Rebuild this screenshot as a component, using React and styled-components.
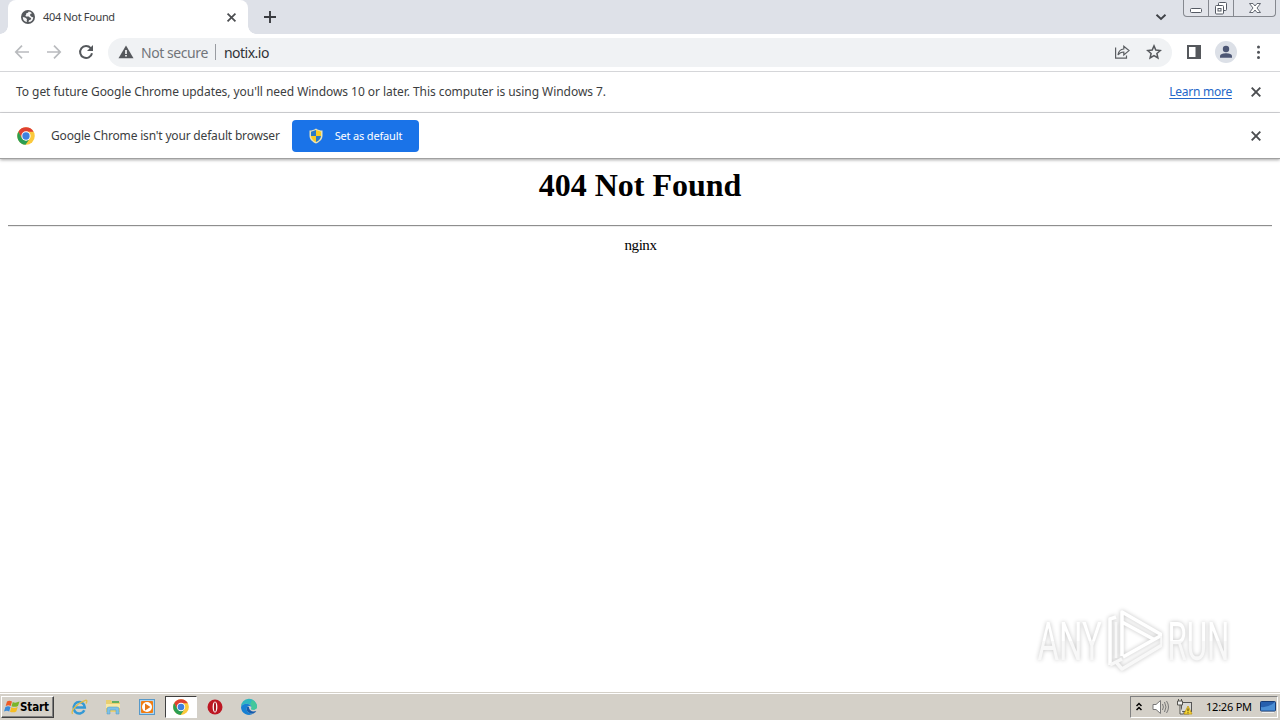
import React from 'react';
import styled, { createGlobalStyle } from 'styled-components';

const Global = createGlobalStyle`
  * { box-sizing: border-box; }
  html, body { margin: 0; padding: 0; overflow: hidden; background: #fff; }
  svg { display: block; flex: none; }
`;

const Screen = styled.div`
  position: relative;
  width: 1280px;
  height: 720px;
  display: flex;
  flex-direction: column;
  overflow: hidden;
  background: #fff;
  font-family: 'Noto Sans', 'DejaVu Sans', sans-serif;
  color: #333;
`;

const Label = styled.span`
  font-size: ${p => p.$size || 12}px;
  line-height: 16px;
  letter-spacing: ${p => p.$track || 0}px;
  color: ${p => p.$color || '#3c3e41'};
  margin-left: ${p => p.$left || 0}px;
  padding-top: ${p => p.$drop || 0}px;
  white-space: nowrap;
`;

const TabStrip = styled.div`
  height: 34px;
  flex: none;
  display: flex;
  align-items: flex-start;
  padding-left: 8px;
  background: #dee1e8;
`;

const Tab = styled.div`
  position: relative;
  width: 240px;
  height: 34px;
  padding: 0 11px 0 13px;
  display: flex;
  align-items: center;
  background: #fff;
  border-radius: 8px 8px 0 0;
  &::before, &::after {
    content: '';
    position: absolute;
    bottom: 0;
    width: 8px;
    height: 8px;
  }
  &::before { left: -8px; background: radial-gradient(circle at 0 0, transparent 7.5px, #fff 8px); }
  &::after { right: -8px; background: radial-gradient(circle at 100% 0, transparent 7.5px, #fff 8px); }
  ${Label} { flex: 1; margin-left: 8px; }
`;

const NewTab = styled.div`
  height: 34px;
  padding-left: 15px;
  display: flex;
  align-items: center;
  flex: 1;
`;

const TabSearch = styled.div`
  height: 34px;
  display: flex;
  align-items: center;
  margin-right: 16px;
`;

const WindowButtons = styled.div`
  display: flex;
  width: 93px;
  height: 17px;
  margin-right: 4px;
  border: 1px solid #85888f;
  border-top: 0;
  border-radius: 0 0 4px 4px;
  background: #e2e4ea;
`;

const WindowButton = styled.div`
  width: ${p => p.$w}px;
  display: flex;
  justify-content: center;
  border-right: ${p => (p.$last ? 0 : 1)}px solid #85888f;
`;

const Toolbar = styled.div`
  height: 38px;
  flex: none;
  display: flex;
  align-items: center;
  padding: 0 13px 1px 14px;
  border-bottom: 1px solid #d5d6d9;
`;

const NavIcons = styled.div`
  display: flex;
  gap: 16px;
  width: 94px;
`;

const Omnibox = styled.div`
  width: 1064px;
  height: 29px;
  display: flex;
  align-items: center;
  padding: 0 10px 0 10px;
  border-radius: 15px;
  background: #f0f2f4;
`;

const Divider = styled.div`
  width: 1px;
  height: 16px;
  margin: 0 8px 0 7px;
  background: #999ca1;
`;

const Actions = styled.div`
  margin-left: auto;
  display: flex;
  align-items: center;
  gap: 16px;
`;

const ToolbarEnd = styled.div`
  display: flex;
  align-items: center;
  gap: 13px;
  margin-left: 14px;
`;

const InfoBar = styled.div`
  height: ${p => p.$h}px;
  flex: none;
  display: flex;
  align-items: center;
  padding: 0 18px 0 16px;
  border-bottom: ${p => (p.$last ? '1px solid #a0a0a0' : '1px solid #d5d6d9')};
  box-shadow: ${p => (p.$last ? '0 1px 3px rgba(0,0,0,.35)' : 'none')};
`;

const Link = styled.a`
  margin-left: auto;
  margin-right: 18px;
  font-size: 12px;
  line-height: 16px;
  letter-spacing: -0.25px;
  color: #2467c9;
  text-decoration: underline;
  text-underline-offset: 2px;
`;

const DefaultButton = styled.button`
  width: 127px;
  height: 32px;
  margin: 0 auto 0 12px;
  padding: 0 0 0 17px;
  display: flex;
  align-items: center;
  gap: 12px;
  border: 0;
  border-radius: 4px;
  background: #1a73e8;
  font-family: inherit;
`;

const Page = styled.main`
  flex: 1;
  padding: 8px 8px 0;
  text-align: center;
  font-family: 'Liberation Serif', serif;
  color: #000;
`;

const Heading = styled.h1`
  margin: 0 0 22px;
  font-size: 32px;
  line-height: 36px;
  letter-spacing: 0;
`;

const Rule = styled.hr`
  margin: 0 0 9px;
  border: 0 solid;
  border-width: 1px 0;
  border-color: #8e8e8e transparent #ededed;
`;

const Server = styled.div`
  font-size: 15px;
  line-height: 18px;
  letter-spacing: -0.45px;
  padding-left: 1px;
`;

const Watermark = styled.div`
  position: absolute;
  left: 1038px;
  top: 608px;
  width: 195px;
  height: 66px;
  display: flex;
  align-items: center;
  filter: drop-shadow(0 0 2px rgba(0,0,0,.24));
  > svg { margin: 0 5px 0 1px; }
`;

const BrandBox = styled.div`
  width: 63px;
  display: flex;
  justify-content: center;
`;

const Brand = styled.span`
  font: 400 54px/64px Roboto, sans-serif;
  padding-top: 2px;
  transform: scaleX(${p => p.$sx});
  color: transparent;
  background: linear-gradient(#fff 0 50%, #f8f8f8 50% 100%);
  background-clip: text;
  -webkit-background-clip: text;
`;

const Taskbar = styled.div`
  height: 28px;
  flex: none;
  display: flex;
  align-items: center;
  padding: 2px 2px 1px 1px;
  border-top: 1px solid #d4d0c8;
  box-shadow: inset 0 1px #fff;
  background: #d4d0c8;
`;

const StartButton = styled.div`
  width: 53px;
  height: 22px;
  display: flex;
  align-items: center;
  gap: 0;
  padding-left: 2px;
  border: 1px solid;
  border-color: #fff #404040 #404040 #fff;
  box-shadow: inset -1px -1px #808080;
  font: bold 11.5px/16px 'DejaVu Sans Condensed', 'DejaVu Sans', sans-serif;
  letter-spacing: -0.1px;
  color: #000;
`;

const Launchers = styled.div`
  display: flex;
  align-items: center;
  margin-left: 8px;
`;

const Launcher = styled.div`
  width: ${p => (p.$active ? 32 : 34)}px;
  height: 22px;
  margin: 0 ${p => (p.$active ? 1 : 0)}px;
  display: flex;
  align-items: center;
  justify-content: center;
  background: ${p => (p.$active ? '#fff' : 'transparent')};
  border: ${p => (p.$active ? '1px solid' : '0')};
  border-color: #404040 #fff #fff #404040;
`;

const Tray = styled.div`
  width: 148px;
  height: 22px;
  margin-left: auto;
  padding: 0 2px 0 5px;
  display: flex;
  align-items: center;
  border: 1px solid;
  border-color: #808080 #fff #fff #808080;
`;

const Clock = styled.span`
  margin: 0 8px 0 12px;
  font-size: 11px;
  line-height: 16px;
  letter-spacing: -0.22px;
  color: #000;
  white-space: nowrap;
`;

const TrayIcon = styled.div`
  margin-left: ${p => p.$left}px;
`;

const Close = ({ size = 12, color = '#4b4d50' }) => (
  <svg width={size} height={size} viewBox="0 0 12 12">
    <path d="M1.7 1.7 10.3 10.3M10.3 1.7 1.7 10.3" stroke={color} strokeWidth="1.9" />
  </svg>
);

const Chrome = ({ size }) => (
  <svg width={size} height={size} viewBox="0 0 24 24">
    <circle cx="12" cy="12" r="10.5" fill="#fbc93c" />
    <path d="M12 12 7 15.2 2.9 6.8A10.5 10.5 0 0 1 21.1 6.8V7H12Z" fill="#df4032" />
    <path d="M2.9 6.8 7.1 14.8 12 17.3 16 16 11.4 22.5A10.5 10.5 0 0 1 2.9 6.8Z" fill="#2c9e52" />
    <circle cx="12" cy="12" r="5.6" fill="#fff" />
    <circle cx="12" cy="12" r="4.4" fill="#3f80df" />
  </svg>
);

const Arrow = ({ flip }) => (
  <svg width="16" height="16" viewBox="0 0 16 16">
    <path d="M15 8H2M8 1.7 1.8 8 8 14.3" fill="none" stroke="#b9bbbe" strokeWidth="1.7" transform={flip ? 'matrix(-1 0 0 1 16 0)' : undefined} />
  </svg>
);

export default function App() {
  return (
    <Screen>
      <Global />
      <TabStrip>
        <Tab>
          <svg width="14" height="14" viewBox="0 0 14 14">
            <circle cx="7" cy="7" r="7" fill="#55585c" />
            <path d="M7.6 1.5C7.5 3 6.5 2.8 5.4 3.2 4.7 3.8 5.8 4.5 4.4 5.4L5 6.4H7.8L8.8 7.5 10.2 8 9.6 9.7 8 10.2 7.5 12.1A5.2 5.2 0 0 0 12.3 7.3L10.8 7 9.1 5.5 9.3 3.9 11 3.3A5.3 5.3 0 0 0 7.6 1.5ZM1.8 7 4 7.4 6 9 5.7 10.6 6 12.1A5.2 5.2 0 0 1 1.8 7Z" fill="#f4f4f5" />
          </svg>
          <Label $size={11} $track={-0.35}>404 Not Found</Label>
          <Close size={11} />
        </Tab>
        <NewTab>
          <svg width="14" height="14" viewBox="0 0 14 14"><path d="M7 1V13M1 7H13" stroke="#393b40" strokeWidth="1.9" /></svg>
        </NewTab>
        <TabSearch>
          <svg width="12" height="12" viewBox="0 0 12 12"><path d="M1.5 3.7 6 8 10.5 3.7" fill="none" stroke="#3f4247" strokeWidth="1.9" /></svg>
        </TabSearch>
        <WindowButtons>
          <WindowButton $w={25}>
            <svg width="14" height="16" viewBox="0 0 14 16"><rect x="1.5" y="8.5" width="11" height="4" rx="1" fill="#fff" stroke="#555a64" /></svg>
          </WindowButton>
          <WindowButton $w={25}>
            <svg width="14" height="16" viewBox="0 0 14 16"><g stroke="#555a64"><rect x="4.5" y="2.5" width="8" height="8" rx="1" fill="#fff" /><rect x="1.5" y="5.5" width="8" height="8.5" rx="1" fill="#fff" /><rect x="4" y="8.5" width="3" height="2.5" fill="none" /></g></svg>
          </WindowButton>
          <WindowButton $w={41} $last>
            <svg width="14" height="16" viewBox="0 0 14 16"><path d="M1.5 3.5H5L7 6 9 3.5H12.5L9 8 12.5 12.5H9L7 10 5 12.5H1.5L5 8Z" fill="#fff" stroke="#555a64" strokeWidth=".9" /></svg>
          </WindowButton>
        </WindowButtons>
      </TabStrip>

      <Toolbar>
        <NavIcons>
          <Arrow />
          <Arrow flip />
          <svg width="16" height="16" viewBox="0 0 16 16">
            <path d="M12.7 4.1A6 6 0 1 0 14 9.2" fill="none" stroke="#55585c" strokeWidth="2" />
            <path d="M15 1V7H9Z" fill="#55585c" />
          </svg>
        </NavIcons>
        <Omnibox>
          <svg width="16" height="14" viewBox="0 0 16 14">
            <path d="M8 .5 15.5 13.3H.5Z" fill="#55585c" />
            <path d="M7.2 5H8.8V9H7.2ZM7.2 10H8.8V11.6H7.2Z" fill="#fff" />
          </svg>
          <Label $size={14} $track={-0.43} $color="#72757a" $left={7} $drop={1}>Not secure</Label>
          <Divider />
          <Label $size={14} $track={-0.5} $color="#303236" $drop={1}>notix.io</Label>
          <Actions>
            <svg width="16" height="16" viewBox="0 0 16 16" fill="none" stroke="#5b5e62" strokeWidth="1.2">
              <path d="M1.6 3.5V14.2H12.5V11.5M4 11C4.5 7 6.5 5.3 9.8 5V2.2L15 6.6 9.8 11V8C7.3 8 5.6 8.8 4 11Z" />
            </svg>
            <svg width="16" height="16" viewBox="0 0 16 16"><path d="M8 1.9 9.8 6.1 14.3 6.5 10.9 9.5 11.9 14 8 11.6 4.1 14 5.1 9.5 1.7 6.5 6.2 6.1Z" fill="none" stroke="#55585c" strokeWidth="1.5" /></svg>
          </Actions>
        </Omnibox>
        <ToolbarEnd>
          <svg width="16" height="16" viewBox="0 0 16 16"><rect x="2" y="2" width="12" height="12" fill="#fff" stroke="#55585c" strokeWidth="2" /><rect x="9.5" y="2" width="4.5" height="12" fill="#55585c" /></svg>
          <svg width="22" height="22" viewBox="0 0 22 22"><circle cx="11" cy="11" r="11" fill="#dce0e7" /><circle cx="11" cy="8" r="3.2" fill="#4c5674" /><path d="M5 16.7V15.2C5 13 8.5 12.3 11 12.3S17 13 17 15.2V16.7Z" fill="#4c5674" /></svg>
          <svg width="17" height="16" viewBox="0 0 17 16" fill="#505358"><circle cx="8.5" cy="3" r="1.5" /><circle cx="8.5" cy="8.2" r="1.5" /><circle cx="8.5" cy="13.4" r="1.5" /></svg>
        </ToolbarEnd>
      </Toolbar>

      <InfoBar $h={41}>
        <Label $track={-0.053}>To get future Google Chrome updates, you'll need Windows 10 or later. This computer is using Windows 7.</Label>
        <Link>Learn more</Link>
        <Close />
      </InfoBar>
      <InfoBar $h={46} $last>
        <Chrome size={20} />
        <Label $track={-0.18} $left={15}>Google Chrome isn't your default browser</Label>
        <DefaultButton>
          <svg width="14" height="16" viewBox="0 0 14 16">
            <path d="M7 .5C9 2 11 2.5 13.5 2.5V7.5C13.5 11.5 10.5 14 7 15.5 3.5 14 .5 11.5 .5 7.5V2.5C3 2.5 5 2 7 .5Z" fill="#e9e2b6" />
            <path d="M7 2 2 3.7V8H7Z" fill="#297ac6" /><path d="M7 2 12 3.7V8H7Z" fill="#f8cb22" />
            <path d="M2 8H7V14C4 12.8 2.3 10.7 2 8Z" fill="#f8cb22" /><path d="M7 8H12C11.7 10.7 10 12.8 7 14Z" fill="#297ac6" />
          </svg>
          <Label $size={11} $color="#fff" $track={-0.17}>Set as default</Label>
        </DefaultButton>
        <Close />
      </InfoBar>

      <Page>
        <Heading>404 Not Found</Heading>
        <Rule />
        <Server>nginx</Server>
      </Page>

      <Watermark>
        <BrandBox><Brand $sx={0.61}>ANY</Brand></BrandBox>
        <svg width="60" height="66" viewBox="0 0 60 66" fill="none" stroke="#fff" strokeWidth="3.5" strokeLinejoin="round">
          <path d="M8 57V11L14 9" />
          <path d="M14 50V14" stroke="#f8f8f8" strokeWidth="2.5" />
          <path d="M20 48V4L60 27 21 49M20 14 53 32" />
          <path d="M14 54 20 61 60 37V28" stroke="#f8f8f8" />
          <path d="M8 57 20 51" stroke="#f8f8f8" />
        </svg>
        <BrandBox><Brand $sx={0.58}>RUN</Brand></BrandBox>
      </Watermark>

      <Taskbar>
        <StartButton>
          <svg width="16" height="16" viewBox="0 0 16 16">
            <path d="M3 2.5C5 1 6.5 1.8 8 2.5L6.7 7C5 6 3.5 6.2 1.7 7Z" fill="#ef5b25" />
            <path d="M8.8 3C10.5 4 12.5 3.8 15.5 2.5L14 7C11.5 8.2 9.5 8 7.5 7.2Z" fill="#79b52a" />
            <path d="M1.4 8C3.5 7 5 7.2 6.5 8L5.2 12.4C3.5 11.5 2 11.5 0 12.5Z" fill="#3a8bd9" />
            <path d="M7.3 8.3C9.5 9.3 11.5 9 13.7 8L12.3 12.4C10 13.7 8 13.5 6 12.7Z" fill="#f6bd23" />
          </svg>
          Start
        </StartButton>
        <Launchers>
          <Launcher>
            <svg width="18" height="18" viewBox="0 0 18 18" fill="none">
              <path d="M14.3 12.2A5.6 5.8 0 1 1 14.8 9.4H5.2" stroke="#3499d5" strokeWidth="2.5" />
              <path d="M2.5 16C.5 13 7 5 15.5 2.3 17.2 2 17.3 3.7 16 5.5" stroke="#e2bd48" strokeWidth="1.3" />
            </svg>
          </Launcher>
          <Launcher>
            <svg width="16" height="18" viewBox="0 0 16 18">
              <path d="M1 2H6L7 4H15V14H1Z" fill="#e9cf70" /><path d="M7 3H14V5H7Z" fill="#63af60" /><path d="M1 6H15V10H1Z" fill="#f8e9a5" />
              <path d="M2 16V11Q2 9 4 9H12Q14 9 14 11V16H11V12H5V16Z" fill="#7ec1e7" stroke="#5299c3" strokeWidth=".5" />
            </svg>
          </Launcher>
          <Launcher>
            <svg width="16" height="16" viewBox="0 0 16 16">
              <rect x=".5" y=".5" width="15" height="15" fill="#acd5f3" stroke="#5799c9" />
              <rect x="2" y="2" width="12" height="12" rx="1" fill="#f17d12" /><circle cx="8" cy="8" r="5" fill="#fff" /><path d="M6 4.5 11.5 8 6 11.5Z" fill="#e57819" />
            </svg>
          </Launcher>
          <Launcher $active><Chrome size={18} /></Launcher>
          <Launcher>
            <svg width="16" height="16" viewBox="0 0 16 16"><circle cx="8" cy="8" r="7.5" fill="#bd1723" /><ellipse cx="8" cy="8" rx="2.4" ry="5.5" fill="#fff" /><ellipse cx="8" cy="8" rx="1.1" ry="4.8" fill="#a41720" /></svg>
          </Launcher>
          <Launcher>
            <svg width="18" height="18" viewBox="0 0 18 18">
              <path d="M1 9A8 8 0 0 1 17 8.5C17.2 11.5 13.8 12.2 11 11.2 12 10 11.5 7.5 9.5 6.500 6.500 5 2.500 6 1 9Z" fill="#2fb7c0" />
              <path d="M12 2A8 8 0 0 1 17 8.5C17.2 11.5 13.8 12.2 11 11.2 12.300 9.500 11.500 7.500 10 6.700Z" fill="#43c79b" />
              <path d="M1 9C2.5 6 6.500 5 9.500 6.500 10.700 7.200 11 8 11 8.800 10.500 8 8.500 7.500 7.200 9 5.200 12 8.500 16 13.500 15.500A8 8 0 0 1 1 9Z" fill="#1780d3" />
              <path d="M7.200 9C5.2 12 8.5 16 13.500 15.500 14.800 14.800 15.800 14 16.300 13 12.500 14.500 8.500 12.500 9 9 8.500 8.500 7.800 8.500 7.200 9Z" fill="#175cad" />
            </svg>
          </Launcher>
        </Launchers>
        <Tray>
          <svg width="6" height="10" viewBox="0 0 6 10"><path d="M.5 4 3 1.5 5.5 4M.5 8 3 5.5 5.5 8" fill="none" stroke="#000" strokeWidth="1.5" /></svg>
          <TrayIcon $left={10}>
            <svg width="18" height="16" viewBox="0 0 18 16">
              <path d="M1 5.5H4L8.5 1.5V14.5L4 10.5H1Z" fill="#fff" stroke="#777" /><path d="M10.5 5Q12.3 8 10.5 11M12.5 3Q15.5 8 12.5 13M14.5 2Q18.5 8 14.5 14" fill="none" stroke="#777" />
            </svg>
          </TrayIcon>
          <TrayIcon $left={6}>
            <svg width="18" height="18" viewBox="0 0 18 18">
              <rect x="5.5" y="4.5" width="10" height="9" fill="#d8d8d5" stroke="#555" /><path d="M7 15.5H13" stroke="#777" strokeWidth="2" />
              <path d="M1.5 3V7H6.5V3ZM2.5 1V3M5.5 1V3M4 7V16H7" fill="#eee" stroke="#55544f" />
              <path d="M12 8 16 16H8Z" fill="#f6d737" stroke="#bf9510" strokeWidth=".8" /><path d="M11.5 10.5H12.5V13.2H11.5ZM11.5 14.2H12.5V15.2H11.5Z" fill="#3d370f" />
            </svg>
          </TrayIcon>
          <Clock>12:26 PM</Clock>
          <svg width="16" height="14" viewBox="0 0 16 14"><rect x=".5" y="1.5" width="15" height="9.5" rx="1" fill="#265fae" stroke="#173b75" /><path d="M1 7Q8 8 15 2V10.5H1Z" fill="#4b8ed4" /><path d="M2 12.5H14" stroke="#eee" /></svg>
        </Tray>
      </Taskbar>
    </Screen>
  );
}
